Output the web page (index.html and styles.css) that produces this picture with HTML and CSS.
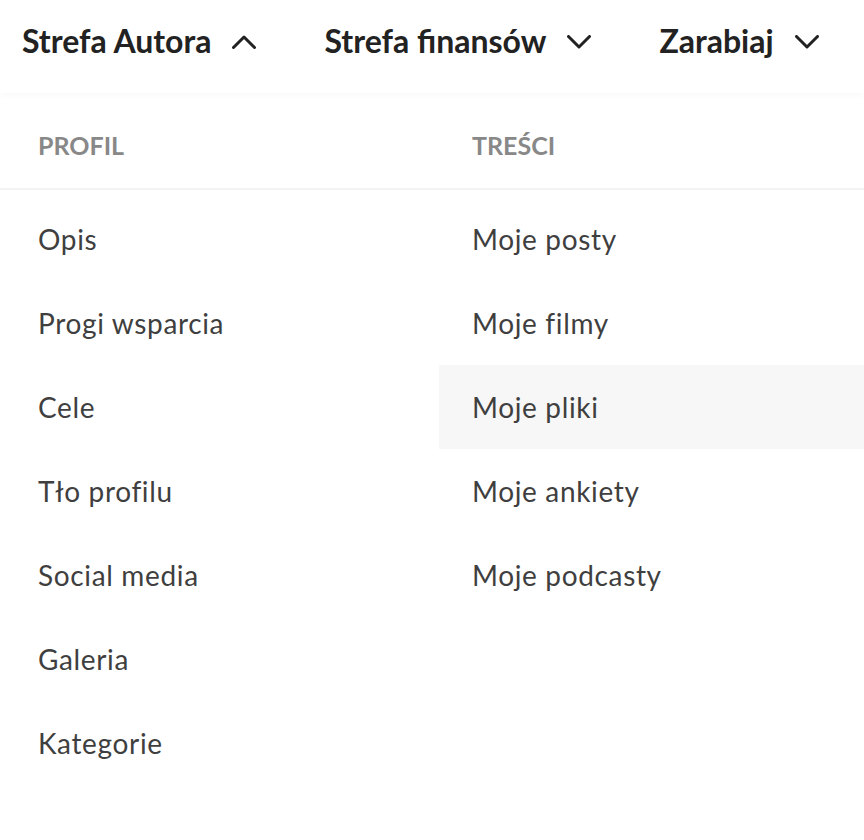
FILE: index.html
```html
<!DOCTYPE html>
<html lang="pl">
<head>
<meta charset="utf-8">
<link rel="stylesheet" href="styles.css">
</head>
<body>
<header class="nav">
  <div class="nav-item">
    <span class="nav-label">Strefa Autora</span>
    <svg class="chev" width="24" height="14" viewBox="0 0 24 14"><path d="M1.5 12.5 L12 2 L22.5 12.5" fill="none" stroke="#222" stroke-width="3" stroke-linecap="round" stroke-linejoin="round"/></svg>
  </div>
  <div class="nav-item">
    <span class="nav-label">Strefa finansów</span>
    <svg class="chev" width="24" height="14" viewBox="0 0 24 14"><path d="M1.5 1.5 L12 12 L22.5 1.5" fill="none" stroke="#222" stroke-width="3" stroke-linecap="round" stroke-linejoin="round"/></svg>
  </div>
  <div class="nav-item">
    <span class="nav-label">Zarabiaj</span>
    <svg class="chev" width="24" height="14" viewBox="0 0 24 14"><path d="M1.5 1.5 L12 12 L22.5 1.5" fill="none" stroke="#222" stroke-width="3" stroke-linecap="round" stroke-linejoin="round"/></svg>
  </div>
</header>
<main class="menu">
  <div class="heads">
    <div class="head head-left">PROFIL</div>
    <div class="head head-right">TREŚCI</div>
  </div>
  <div class="cols">
    <ul class="col col-left">
      <li class="item">Opis</li>
      <li class="item">Progi wsparcia</li>
      <li class="item">Cele</li>
      <li class="item">Tło profilu</li>
      <li class="item">Social media</li>
      <li class="item">Galeria</li>
      <li class="item">Kategorie</li>
    </ul>
    <ul class="col col-right">
      <li class="item">Moje posty</li>
      <li class="item">Moje filmy</li>
      <li class="item active">Moje pliki</li>
      <li class="item">Moje ankiety</li>
      <li class="item">Moje podcasty</li>
    </ul>
  </div>
</main>
</body>
</html>
```

FILE: styles.css
```css
* { box-sizing: border-box; }
html, body { margin: 0; padding: 0; background: #fff; }
body {
  font-family: Lato, "Noto Sans", sans-serif;
  width: 864px;
  height: 840px;
  overflow: hidden;
}
.nav {
  height: 93px;
  display: flex;
  align-items: center;
  padding-left: 22px;
  padding-bottom: 12px;
  gap: 68px;
  position: relative;
  z-index: 1;
  box-shadow: 0 3px 6px rgba(0,0,0,0.025);
}
.nav-item {
  display: flex;
  align-items: center;
  gap: 21px;
}
.nav-label {
  font-size: 32px;
  font-weight: 700;
  color: #222;
  line-height: 1;
}
.chev { display: block; margin-top: 2px; }
.heads {
  display: flex;
  height: 97px;
  align-items: center;
  border-bottom: 2px solid #f3f3f3;
  padding-top: 8px;
}
.head {
  font-size: 25px;
  font-weight: 700;
  color: #888;
}
.head-left { width: 439px; padding-left: 38px; }
.head-right { padding-left: 33px; }
.cols {
  display: flex;
  padding-top: 7px;
}
.col { list-style: none; margin: 0; padding: 0; }
.col-left { width: 439px; }
.col-right { flex: 1; }
.item {
  height: 84px;
  display: flex;
  align-items: center;
  font-size: 28px;
  letter-spacing: 0.65px;
  color: #3f3f3f;
}
.col-left .item { padding-left: 38px; }
.col-right .item { padding-left: 33px; }
.item.active { background: #f7f7f7; }
```
